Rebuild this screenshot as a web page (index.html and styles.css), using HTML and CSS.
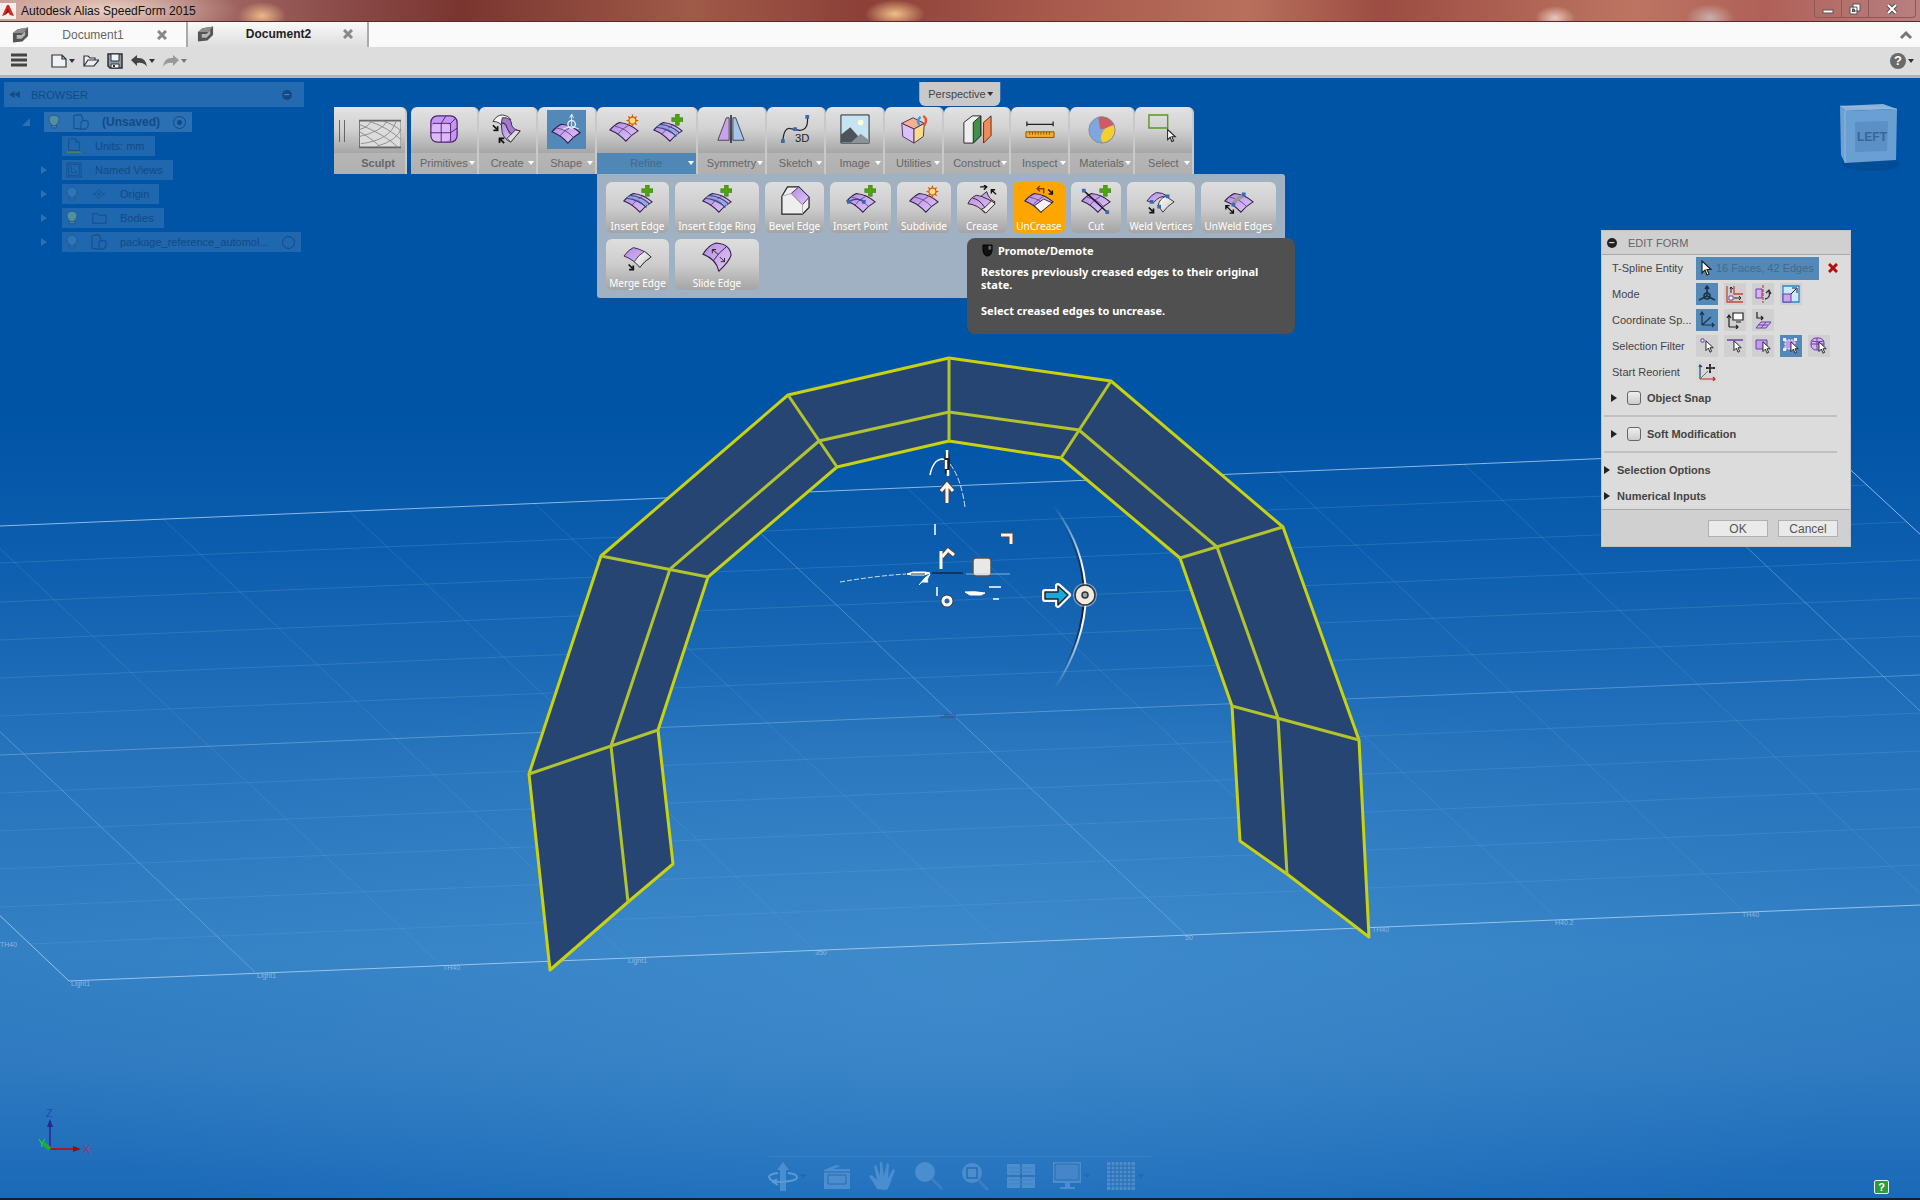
FILE: index.html
```html
<!DOCTYPE html>
<html lang="en">
<head>
    <meta charset="utf-8">
    <title>Autodesk Alias SpeedForm 2015</title>
    <link rel="stylesheet" href="styles.css">
</head>
<body>
    <!-- Shared icons -->
    <svg class="sprite" aria-hidden="true">
        <defs>
            <linearGradient id="purple" x1="0" y1="0" x2="1" y2="1">
                <stop offset="0" stop-color="#b48ae0"/>
                <stop offset="1" stop-color="#e3c9fb"/>
            </linearGradient>
            <linearGradient id="silver" x1="0" y1="0" x2="1" y2="1">
                <stop offset="0" stop-color="#ffffff"/>
                <stop offset="1" stop-color="#c4c4c4"/>
            </linearGradient>
        </defs>
        <symbol id="patch" viewBox="0 0 32 32">
            <path d="M1 17Q6 11 11 9Q22 10 31 18Q24 22 18 29Q11 21 1 17Z" fill="url(#purple)" stroke="#2f2147" stroke-width="1.200"/>
            <path d="M6 13Q17 15 24 23M21 12Q13 16 9 22" fill="none" stroke="#6a4a94"/>
        </symbol>
        <symbol id="plus" viewBox="0 0 32 32">
            <path d="M20 4h4V0h4v4h4v4h-4v4h-4V8h-4z" fill="#4fa312" stroke="#347a0a" stroke-width=".6"/>
        </symbol>
        <symbol id="spark" viewBox="0 0 32 32">
            <path d="M25 0l1.500 3.500L30 2l-1.500 3.500L32 7l-3.500 1.500L30 12l-3.500-1.500L25 14l-1.500-3.500L20 12l1.500-3.500L18 7l3.500-1.500L20 2l3.500 1.500z" fill="#e2570e"/>
            <circle cx="25" cy="7" r="3" fill="#ffe27a"/>
        </symbol>
        <symbol id="band" viewBox="0 0 32 32">
            <path d="M4 14Q17 16 25 24M7 11Q20 12 28 20" fill="none" stroke="#2d4f85" stroke-width="1.300"/>
            <path d="M5 13Q18 14 27 22" fill="none" stroke="#86a5dc" stroke-width="1.600"/>
        </symbol>
        <symbol id="arrow-se" viewBox="0 0 8 8"><path d="M1 1l4 4M6 2v4.500H1.500" fill="none" stroke="#111" stroke-width="1.800"/></symbol>
        <symbol id="cursor" viewBox="0 0 12 16"><path d="M1 1v12l3-3 2 5 2-1-2-4.500h4z" fill="#fff" stroke="#222" stroke-width="1.200"/></symbol>
        <symbol id="bulb" viewBox="0 0 14 18"><path d="M4 12Q1 9 1 6a6 5 0 0 1 12 0Q13 9 10 12v4H4z" fill="currentColor" stroke="#20588f"/><path d="M4 13h6M5 15h4" stroke="#20588f"/></symbol>
        <symbol id="part" viewBox="0 0 18 18"><path d="M1 2l4-1h4l2 4v3l4-1 2 2v5l-3 3H8l-7-1zM9 17V9l3-2" fill="none" stroke="#164f8c" stroke-width="1.200"/></symbol>
        <symbol id="cube" viewBox="0 0 18 16"><path d="M1 6l5-4 11-2v9l-6 6-10 1z" fill="#555"/><path d="M1 6l5-4 11-2-5 6z" fill="#8d8d8d"/><path d="M5 8h5l4-4v4l-4 4H5z" fill="#b5b5b5"/></symbol>
    </svg>

    <header class="titlebar">
        <svg class="app-logo" viewBox="0 0 16 16"><rect width="16" height="16" fill="#f4eeee"/><path d="M2 13L7 2h2l5 11-4-1-2-3-3 3z" fill="#d3291c"/><path d="M5 12l3-7 1 4z" fill="#8d120d"/></svg>
        <span class="app-title">Autodesk Alias SpeedForm 2015</span>
        <div class="window-buttons">
            <button aria-label="Minimize"><svg viewBox="0 0 14 12"><rect x="2" y="7" width="10" height="3" fill="#fff" stroke="#555"/></svg></button>
            <button aria-label="Restore"><svg viewBox="0 0 14 12"><path d="M5 1h7v7H5zM2 4h7v7H2z" fill="#fff" stroke="#555"/><rect x="4.500" y="6.500" width="2" height="2" fill="#b07070" stroke="#555"/></svg></button>
            <button class="close" aria-label="Close"><svg viewBox="0 0 14 12"><path d="M3 2l8 8M11 2l-8 8" stroke="#555" stroke-width="4"/><path d="M3 2l8 8M11 2l-8 8" stroke="#fff" stroke-width="2"/></svg></button>
        </div>
    </header>

    <div class="tabs">
        <div class="tab">
            <svg class="tab-icon"><use href="#cube"/></svg>
            <span>Document1</span>
            <button aria-label="Close Document1"><svg viewBox="0 0 10 10"><path d="M1 1l8 8M9 1L1 9"/></svg></button>
        </div>
        <div class="tab active">
            <svg class="tab-icon"><use href="#cube"/></svg>
            <span>Document2</span>
            <button aria-label="Close Document2"><svg viewBox="0 0 10 10"><path d="M1 1l8 8M9 1L1 9"/></svg></button>
        </div>
        <button class="collapse" aria-label="Collapse"><svg viewBox="0 0 14 10"><path d="M2 8l5-5 5 5" fill="none" stroke="#777" stroke-width="3"/></svg></button>
    </div>

    <div class="toolbar">
        <button class="menu" aria-label="Menu"><svg viewBox="0 0 16 16"><path d="M0 2h16M0 7h16M0 12h16" stroke="#444" stroke-width="3"/></svg></button>
        <button class="caret" aria-label="New"><svg viewBox="0 0 16 16"><path d="M1 2h10l4 4v8H1zM11 2v4h4" fill="#f2f2f2" stroke="#2c3540" stroke-width="1.200"/></svg></button>
        <button aria-label="Open"><svg viewBox="0 0 16 16"><path d="M1 13V3h4l2 2h5v2M1 13L5 7h11l-5 6z" fill="#eee" stroke="#2c3540" stroke-width="1.200"/></svg></button>
        <button aria-label="Save"><svg viewBox="0 0 16 16"><path d="M1 1h14v14H3l-2-2z" fill="#8d99a8" stroke="#2b2f36" stroke-width="1.500"/><path d="M4 1h8v7H4zM4 11h8v4H4z" fill="#f2f2f2" stroke="#2b2f36"/><path d="M6 12h2v2H6z" fill="#2b2f36"/></svg></button>
        <button class="caret" aria-label="Undo"><svg viewBox="0 0 16 16"><path d="M0 7l6-5v3q9-1 10 9-3-5-10-4v3z" fill="#444"/></svg></button>
        <button class="caret off" aria-label="Redo"><svg viewBox="0 0 16 16"><path d="M16 7l-6-5v3Q1 4 0 14q3-5 10-4v3z" fill="#999"/></svg></button>
        <button class="caret help" aria-label="Help"><span>?</span></button>
    </div>

    <main class="viewport">
        <!-- 3D scene: ground grid, mesh and manipulator -->
        <svg class="scene" viewBox="0 78 1920 1120" preserveAspectRatio="xMidYMid slice">
            <defs>
                <linearGradient id="fade" x1="0" y1="0" x2="0" y2="1">
                    <stop offset="0" stop-color="#fff" stop-opacity="0"/>
                    <stop offset=".35" stop-color="#fff"/>
                    <stop offset=".65" stop-color="#fff"/>
                    <stop offset="1" stop-color="#fff" stop-opacity="0"/>
                </linearGradient>
                <linearGradient id="fade-dark" x1="0" y1="0" x2="0" y2="1">
                    <stop offset=".1" stop-color="#123" stop-opacity="0"/>
                    <stop offset=".4" stop-color="#123"/>
                    <stop offset=".6" stop-color="#123"/>
                    <stop offset=".9" stop-color="#123" stop-opacity="0"/>
                </linearGradient>
            </defs>
            <g class="grid">
                <path d="M0 563L1868 485M0 602L1907 522M0 640L1920 560M0 678L1920 598M0 716L1920 636M0 793L1920 713M0 831L1920 751M0 869L1920 789M0 907L1920 827M30 944L1920 865"/>
                <path d="M-24 526L441 965M162 518L627 957M348 510L813 949M534 503L999 941M906 487L1371 926M1092 479L1557 918M1278 472L1743 910M1464 464L1929 902"/>
            </g>
            <g class="grid mid">
                <path d="M0 755L1920 675M-210 534L255 972M720 495L1185 934M1650 456L2115 895"/>
            </g>
            <g class="grid edge">
                <path d="M0 526L1828 449L2301 887M-396 541L69 981L1920 905"/>
            </g>
            <g class="grid-labels">
                <text x="71" y="986">Light1</text>
                <text x="257" y="978">Light1</text>
                <text x="443" y="970">TH40</text>
                <text x="628" y="963">Light1</text>
                <text x="815" y="955">350</text>
                <text x="1185" y="940">50</text>
                <text x="1372" y="932">TH40</text>
                <text x="1555" y="925">H40.2</text>
                <text x="1742" y="917">TH40</text>
                <text x="0" y="947">TH40</text>
            </g>

            <g class="mesh">
                <path class="face" d="M550 970L529 774L601 556L788 395L949 358L1111 381L1283 527L1359 740L1369 937L1287 874L1240 841L1232 706L1180 558L1061 458L949 441L837 467L708 577L658 730L673 864L628 902Z"/>
                <path class="inner" d="M628 902L611 746L670 569L819 441L949 412L1079 430L1217 547L1278 718L1287 874"/>
                <path class="inner" d="M529 774L658 730M601 556L708 577M788 395L837 467M949 358V441M1111 381L1061 458M1283 527L1180 558M1359 740L1232 706"/>
            </g>

            <g class="manipulator">
                <path d="M1052 508Q1083 548 1084 595Q1083 642 1053 688" fill="none" stroke="url(#fade-dark)" stroke-width="2"/>
                <path d="M1054 506Q1085 548 1086 595Q1085 642 1055 688" fill="none" stroke="url(#fade)" stroke-width="2"/>
                <circle cx="1085" cy="595" r="12" fill="#fff" opacity=".4"/>
                <circle cx="1085" cy="595" r="10" fill="#f0ebe6" stroke="#333" stroke-width="1.500"/>
                <circle cx="1085" cy="595" r="3" fill="#9aa" stroke="#333" stroke-width="1.500"/>
                <path d="M1045 592h13v-6l10 9-10 10v-6h-13z" fill="#16a9de" stroke="#fff" stroke-width="6" stroke-linejoin="round"/>
                <path d="M1045 592h13v-6l10 9-10 10v-6h-13z" fill="#16a9de" stroke="#222" stroke-width="1.500" stroke-linejoin="round"/>
                <path class="halo" d="M947 503V485M941 491l6-7 6 7M1001 535h10v9M942 557l6-7 6 5"/>
                <path class="mark" d="M947 503V485M941 491l6-7 6 7M1001 535h10v9M942 557l6-7 6 5"/>
                <rect x="973" y="558" width="18" height="18" rx="3" fill="#e8e8e8" stroke="#5a5249" stroke-width="1.500"/>
                <circle cx="947" cy="601" r="4" fill="#2862aa" stroke="#4a3a30" stroke-width="5"/>
                <circle cx="947" cy="601" r="4" fill="#2862aa" stroke="#fff" stroke-width="3"/>
                <path d="M941 551v18" stroke="#fff" stroke-width="3"/>
                <path d="M935 524v11M937 587v9M930 475Q933 460 942 459L947 460" fill="none" stroke="#fff" stroke-width="1.500"/>
                <path d="M950 464Q961 478 965 507" fill="none" stroke="#fff" stroke-dasharray="6 2" opacity=".8"/>
                <path d="M840 582Q875 576 906 574" fill="none" stroke="#fff" stroke-dasharray="5 2" opacity=".8"/>
                <path d="M945 452h4l1 10-1 12h-4l-1-12z" fill="#222"/>
                <path d="M947 450v8M946 460v9M948 470v6" stroke="#fff" stroke-width="2.500"/>
                <path d="M907 574l6-2h12l5 1-6 2h-12zM919 585l6-7 5-4-3 6 1 2h-6z" fill="#fff" stroke="#fff"/>
                <path d="M911 574h14" stroke="#333"/>
                <path d="M932 573h31" stroke="#111"/>
                <path d="M966 574h44" stroke="#b7d2ee" opacity=".7"/>
                <path d="M965 592q10-1 20 1l-4 2h-11z" fill="#fff" stroke="#fff"/>
                <path d="M989 587h12M993 599h6" stroke="#fff" stroke-width="1.500"/>
                <path d="M940 717h16M944 715h12" stroke="#2a527e"/>
            </g>

            <g class="triad">
                <path d="M50 1149V1121" stroke="#3232a8" stroke-width="2"/>
                <path d="M47 1127l3-8 3 8z" fill="#28288f"/>
                <path d="M50 1149H75" stroke="#b01820" stroke-width="2"/>
                <path d="M73 1146l8 3-8 3z" fill="#8c1018"/>
                <path d="M50 1149l-7-6" stroke="#18b030" stroke-width="4"/>
                <text x="46" y="1117" fill="#2747c0">Z</text>
                <text x="83" y="1153" fill="#c02858">X</text>
                <text x="38" y="1147" fill="#20d040">Y</text>
            </g>
        </svg>

        <button class="camera">Perspective</button>

        <div class="workspace">
            <aside class="browser">
                <div class="browser-head"><svg class="rewind" viewBox="0 0 12 8"><path d="M6 0v8L0 4zM12 0v8L6 4z" fill="#124a86"/></svg><span>BROWSER</span><span class="minus">−</span></div>
                <ul class="tree">
                    <li class="root"><i class="open"></i><div class="node"><svg class="bulb on"><use href="#bulb"/></svg><svg><use href="#part"/></svg><b>(Unsaved)</b><span class="radio on"></span></div></li>
                    <li><i class="none"></i><div class="node"><svg viewBox="0 0 18 18"><path d="M3 14V1h8l4 4v9zM11 1v4h4" fill="none" stroke="#164f8c"/><path d="M1 16h16" stroke="#4d7d63" stroke-width="2"/></svg><span>Units: mm</span></div></li>
                    <li><i></i><div class="node"><svg viewBox="0 0 18 18"><path d="M1 1h16v16H1zM3 3h12v12H3zM6 5v7h6M8 7l5 5" fill="none" stroke="#164f8c"/></svg><span>Named Views</span></div></li>
                    <li><i></i><div class="node"><svg class="bulb"><use href="#bulb"/></svg><svg viewBox="0 0 18 18"><path d="M9 4l5 5-5 5-5-5zM2 9h3M13 9h3M8 8h2v2H8z" fill="none" stroke="#164f8c"/></svg><span>Origin</span></div></li>
                    <li><i></i><div class="node"><svg class="bulb on"><use href="#bulb"/></svg><svg viewBox="0 0 18 18"><path d="M2 15V4h5l2 2h8v9z" fill="none" stroke="#164f8c" stroke-width="1.200"/></svg><span>Bodies</span></div></li>
                    <li><i></i><div class="node"><svg class="bulb"><use href="#bulb"/></svg><svg><use href="#part"/></svg><span>package_reference_automol...</span><span class="radio"></span></div></li>
                </ul>
            </aside>

            <nav class="ribbon">
                <button class="sculpt">
                    <span class="art"><svg class="mesh-icon" viewBox="0 0 48 30"><path d="M0 0h48v30H0z" fill="#dcdcdc" stroke="#666" stroke-width="2"/><path d="M0 12Q20 24 24 30M0 4Q30 16 44 30M10 0Q34 8 48 22M26 0q14 4 22 12M0 18Q26 12 32 0M2 26Q36 22 42 0M20 29Q44 22 48 8M0 10Q10 8 14 0" fill="none" stroke="#888"/></svg></span>
                    <span class="label">Sculpt</span>
                </button>
                <button class="tool">
                    <span class="art"><svg viewBox="0 0 32 32"><rect x="2" y="2" width="28" height="28" rx="7" fill="#c795f2" stroke="#4b2470" stroke-width="1.300"/><rect x="3" y="10" width="20" height="19" rx="5" fill="#dcb8fa"/><path d="M2 20h21l7-5M13 30V10l5-8M4 10h19l5-5M23 10v19" fill="none" stroke="#4b2470"/></svg></span>
                    <span class="label">Primitives</span>
                </button>
                <button class="tool">
                    <span class="art"><svg viewBox="0 0 32 32"><path d="M1 8Q5 1 11 1q7 1 9 5-7-1-9 8Q9 8 1 8z" fill="#f2f2f2" stroke="#333"/><path d="M11 4Q21 3 21 12q2 5 9 6l-4 5Q18 21 16 15 15 8 10 10z" fill="#a877d6" stroke="#333"/><path d="M10 10q4-1 6 5 2 7 8 10l-4 5q-7-3-9-10-1-5-1-10z" fill="url(#purple)" stroke="#333"/><path d="M20 30l10-12-5-1-9 9z" fill="#ddd" stroke="#333"/><use href="#arrow-se" x="0" y="11" width="8" height="8"/><path d="M13 31l-4-4M8 31v-5h5" fill="none" stroke="#111" stroke-width="1.800"/></svg></span>
                    <span class="label">Create</span>
                </button>
                <button class="tool">
                    <span class="art"><span class="picked"><svg viewBox="0 0 32 32"><use href="#patch" y="2"/><path d="M22 13V1M20 4l2-4 2 4M22 13l-9 3M22 13l8 3" fill="none" stroke="#e8eef5"/><circle cx="22" cy="11" r="4" fill="none" stroke="#e8eef5" stroke-width="1.500"/></svg></span></span>
                    <span class="label">Shape</span>
                </button>
                <button class="tool current" aria-expanded="true">
                    <span class="art"><svg viewBox="0 0 32 32"><use href="#patch"/><use href="#spark"/></svg><svg viewBox="0 0 32 32"><use href="#patch"/><use href="#band"/><use href="#plus"/></svg></span>
                    <span class="label">Refine</span>
                </button>
                <button class="tool">
                    <span class="art"><svg viewBox="0 0 32 32"><path d="M2 28L11 4h3v24z" fill="#c9a2ee" stroke="#444"/><path d="M30 28L21 4h-3v24z" fill="#a8c4ea" stroke="#345"/><path d="M16 1v30" stroke="#111" stroke-width="1.500"/></svg></span>
                    <span class="label">Symmetry</span>
                </button>
                <button class="tool">
                    <span class="art"><svg viewBox="0 0 32 32"><path d="M2 29Q3 14 10 15.500q6 1 10 2Q30 17 28 2" fill="none" stroke="#222" stroke-width="1.300"/><path d="M0 27h4v4H0zM13 14h4v4h-4zM26 1h4v4h-4z" fill="#3d69b3"/><text x="15" y="30" font-size="12" fill="#222">3D</text></svg></span>
                    <span class="label">Sketch</span>
                </button>
                <button class="tool">
                    <span class="art"><svg viewBox="0 0 32 32"><path d="M1 1h30v30H1z" fill="#c6e3f3" stroke="#222"/><circle cx="22" cy="9" r="3" fill="#fffbd0"/><path d="M1 22l10-8 14 16H1z" fill="#4d535a"/><path d="M12 30l10-9 9 7v3H12z" fill="#8b9299"/></svg></span>
                    <span class="label">Image</span>
                </button>
                <button class="tool">
                    <span class="art"><svg viewBox="0 0 32 32"><path d="M3 10l12-6 12 6-11 6z" fill="#f7b18d" stroke="#4b3160"/><path d="M3 10l13 6v15L4 24z" fill="#dcc0f8" stroke="#4b3160"/><path d="M16 16l11-6-1 14-10 7z" fill="#fadb8c" stroke="#4b3160"/><path d="M23 3q-5 4-1 9" fill="none" stroke="#3b97e8" stroke-width="2.500"/><path d="M26 2q5 4 1 10" fill="none" stroke="#ee5320" stroke-width="2.500"/></svg></span>
                    <span class="label">Utilities</span>
                </button>
                <button class="tool">
                    <span class="art"><svg viewBox="0 0 32 32"><path d="M2 9l9-7h9v21l-8 8H2z" fill="#eee" stroke="#222"/><path d="M12 9l8-7v21l-8 8z" fill="#3f9248" stroke="#222"/><path d="M23 9l8-7v21l-8 8z" fill="#ee8b57" stroke="#5b2a14"/></svg></span>
                    <span class="label">Construct</span>
                </button>
                <button class="tool">
                    <span class="art"><svg viewBox="0 0 32 32"><path d="M2 8v5M30 8v5M2 11h28" stroke="#222" stroke-width="1.300"/><path d="M1 19h30v6H1z" fill="#f3ad2c" stroke="#855100"/><path d="M5 19v3M8 19v3M11 19v3M14 19v3M17 19v3M20 19v3M23 19v3M26 19v3" stroke="#855100"/></svg></span>
                    <span class="label">Inspect</span>
                </button>
                <button class="tool">
                    <span class="art"><svg viewBox="0 0 32 32"><circle cx="16" cy="17" r="14" fill="#7fa6de"/><path d="M12 3q10-2 17 8-7 5-15 5-1-6-2-13z" fill="#cf5a64"/><path d="M29 12q4 14-12 19-5-6 1-14 4-4 11-5z" fill="#f7cf2d"/><circle cx="16" cy="17" r="14" fill="none" stroke="#889"/></svg></span>
                    <span class="label">Materials</span>
                </button>
                <button class="tool">
                    <span class="art"><svg viewBox="0 0 32 32"><path d="M1 1h20v14H1z" fill="none" stroke="#58991f" stroke-width="1.500"/><use href="#cursor" x="20" y="15" width="11" height="16"/></svg></span>
                    <span class="label">Select</span>
                </button>

                <!-- Refine flyout -->
                <div class="flyout">
                    <button><svg viewBox="0 0 32 32"><use href="#patch"/><use href="#band"/><use href="#plus"/></svg>Insert Edge</button>
                    <button><svg viewBox="0 0 32 32"><use href="#patch"/><use href="#band"/><use href="#plus"/></svg>Insert Edge Ring</button>
                    <button><svg viewBox="0 0 32 32"><path d="M2 12L8 2h12l11 11v11l-7 7H2z" fill="#eee" stroke="#222" stroke-width="1.300"/><path d="M12 9l8-7 11 11-7 8z" fill="url(#purple)" stroke="#432d61"/><path d="M2 12l10-3 12 12v10" fill="none" stroke="#aaa"/></svg>Bevel Edge</button>
                    <button><svg viewBox="0 0 32 32"><use href="#patch"/><path d="M3 18Q10 13 19 17" fill="none" stroke="#2d4f85" stroke-width="1.500"/><path d="M1 16h4v4H1zM17 16h4v4h-4z" fill="#3d69b3"/><use href="#plus"/></svg>Insert Point</button>
                    <button><svg viewBox="0 0 32 32"><use href="#patch"/><use href="#spark"/></svg>Subdivide</button>
                    <button><svg viewBox="0 0 32 32"><path d="M1 20Q4 13 10 11l5 1 6-5q2 8 9 11l-11 12Q12 21 1 20z" fill="url(#purple)" stroke="#322"/><path d="M19 24l7-7 4 3-10 10q-2-3-5-4z" fill="#e8e8e8" stroke="#322"/><path d="M6 14q7 1 13 10M15 12q7 3 11 5" fill="none" stroke="#322"/><path d="M14 2h7M18 0l3 2-3 3M31 10l-5-5M26 9V5h4" fill="none" stroke="#111" stroke-width="1.500"/></svg>Crease</button>
                    <button class="hot"><svg viewBox="0 0 32 32"><use href="#patch"/><path d="M21 15l9 4-12 10-7-7z" fill="#f2f2f2" stroke="#322"/><path d="M14 4h7v5M17 1l-3 3 3 3" fill="none" stroke="#7b3d00" stroke-width="1.500"/><use href="#arrow-se" x="25" y="4" width="7" height="7"/></svg>UnCrease</button>
                    <button><svg viewBox="0 0 32 32"><use href="#patch"/><path d="M3 6l25 23" stroke="#111" stroke-width="1.500"/><path d="M1 4h4v4H1zM26 27h4v4h-4z" fill="#3d69b3"/><use href="#plus"/></svg>Cut</button>
                    <button><svg viewBox="0 0 32 32"><path d="M1 17Q6 10 11 8q7 0 12 4-9-1-15 7z" fill="url(#purple)" stroke="#2f2147"/><path d="M21 12l9 6q-7 4-12 11l-5-7q1-7 8-10z" fill="url(#silver)" stroke="#333"/><path d="M4 16h4v4H4zM12 21h4v4h-4zM21 10h4v4h-4z" fill="#3d69b3"/><use href="#arrow-se" x="2" y="23" width="8" height="8"/></svg>Weld Vertices</button>
                    <button><svg viewBox="0 0 32 32"><use href="#patch"/><path d="M21 11q-9 4-12 11" fill="none" stroke="#999" stroke-width="4"/><path d="M19 8h4v4h-4zM8 19h4v4H8z" fill="#3d69b3"/><path d="M2 22l8 8M2 26v-4h4M10 26v4H6" fill="none" stroke="#111" stroke-width="1.500"/></svg>UnWeld Edges</button>
                    <button><svg viewBox="0 0 32 32"><path d="M1 15Q6 8 11 6Q22 8 30 16Q23 20 18 27Q12 19 1 15Z" fill="url(#purple)" stroke="#2f2147"/><path d="M23 10l7 6q-7 4-12 11l-6-6q4-7 11-11z" fill="url(#silver)" stroke="#333"/><use href="#arrow-se" x="5" y="23" width="8" height="8"/></svg>Merge Edge</button>
                    <button><svg viewBox="0 0 32 32"><path d="M1 13Q7 3 15 1q15 1 16 13-2 7-13 17Q15 18 1 13z" fill="url(#purple)" stroke="#2f2147" stroke-width="1.200"/><path d="M26 5q-8 6-14 15" fill="none" stroke="#2f2147"/><path d="M11 8l6 5M11 12V8h4M19 16l5 5M24 17v4h-4" fill="none" stroke="#222"/></svg>Slide Edge</button>
                </div>

                <div class="tooltip" role="tooltip">
                    <h4><svg viewBox="0 0 12 14"><path d="M1 1h10v6q-1 6-5 6T1 7z" fill="#111" stroke="#000"/><path d="M7 2h3v4H7z" fill="#666"/></svg>Promote/Demote</h4>
                    <p>Restores previously creased edges to their original state.</p>
                    <p>Select creased edges to uncrease.</p>
                </div>
            </nav>

            <div class="side">
                <svg class="viewcube" viewBox="0 0 68 72">
                    <ellipse cx="36" cy="64" rx="29" ry="7" fill="#00407f" opacity=".4"/>
                    <path d="M5 6L48 4l14 5-52 2z" fill="#8cb2d9"/>
                    <path d="M5 6l5 5v52L6 55z" fill="#6fa0d0"/>
                    <path d="M10 11l52-2-1 51-51 3z" fill="#6a9fd3"/>
                    <path d="M20 22l33-1-1 30-32 1z" fill="#5a90c5"/>
                    <path d="M5 6l57 3M10 11v52" stroke="#a9c6e2" opacity=".6"/>
                    <text x="22" y="41">LEFT</text>
                </svg>

                <form class="dialog">
                    <div class="dialog-head"><span class="minus">−</span>EDIT FORM</div>
                    <div class="dialog-body">
                        <div class="row">
                            <span class="name">T-Spline Entity</span>
                            <button type="button" class="entity"><svg><use href="#cursor"/></svg>16 Faces, 42 Edges</button>
                            <button type="button" class="clear" aria-label="Clear"><svg viewBox="0 0 10 10"><path d="M1 1l8 8M9 1L1 9" stroke="#b40e0e" stroke-width="3"/></svg></button>
                        </div>
                        <div class="row">
                            <span class="name">Mode</span>
                            <button type="button" class="opt on" aria-label="All"><svg viewBox="0 0 18 18"><path d="M9 11V2M7 4l2-3 2 3M9 11l-8 4M9 11l8 4" fill="none" stroke="#1d3247" stroke-width="1.500"/><circle cx="9" cy="11" r="3" fill="none" stroke="#1d3247" stroke-width="1.500"/></svg></button>
                            <button type="button" class="opt" aria-label="Move"><svg viewBox="0 0 18 18"><path d="M1 1v16h16M8 1v8h9" fill="none" stroke="#c9472c" stroke-width="1.300"/><path d="M5 8V2M4 4l1-2 2 2M8 13h7M13 11l2 2-2 2" fill="none" stroke="#222"/><path d="M3 11h4v4H3z" fill="#fff" stroke="#6b3fa8"/></svg></button>
                            <button type="button" class="opt" aria-label="Rotate"><svg viewBox="0 0 18 18"><path d="M2 4h6v9H2z" fill="#d5b3f5" stroke="#6b3fa8"/><path d="M9 0v18" stroke="#c22" stroke-dasharray="3 1"/><path d="M11 14q6-1 4-8M12 8l3-3 2 4" fill="none" stroke="#333" stroke-width="1.300"/></svg></button>
                            <button type="button" class="opt" aria-label="Scale"><svg viewBox="0 0 18 18"><path d="M1 1h16v16H1z" fill="#cce8fa" stroke="#2a86c8" stroke-width="1.300"/><path d="M1 9h8v8H1z" fill="#cda4f0" stroke="#6b3fa8"/><path d="M9 9l5-5M10 3h5v5" fill="none" stroke="#222"/></svg></button>
                        </div>
                        <div class="row">
                            <span class="name">Coordinate Sp...</span>
                            <button type="button" class="opt on" aria-label="World"><svg viewBox="0 0 18 18"><path d="M4 14V2M2 4l2-3 2 3M4 14h12M14 12l2 2-2 2M4 14l9-8" fill="none" stroke="#1d3247" stroke-width="1.200"/></svg></button>
                            <button type="button" class="opt" aria-label="View"><svg viewBox="0 0 18 18"><path d="M7 2h10v7H7z" fill="#fff"/><path d="M3 16V5M1 7l2-3 2 3M3 16h9M10 14l2 2-2 2M7 2h10v7H7zM10 11h5" fill="none" stroke="#222" stroke-width="1.200"/></svg></button>
                            <button type="button" class="opt" aria-label="Local"><svg viewBox="0 0 18 18"><path d="M3 1v6h6M7 5l2 2-2 2" fill="none" stroke="#222" stroke-width="1.200"/><path d="M7 11h10l-5 6H2zM12 11l-5 6M4 14h10" fill="#d5b3f5" stroke="#6b3fa8"/></svg></button>
                        </div>
                        <div class="row">
                            <span class="name">Selection Filter</span>
                            <button type="button" class="opt" aria-label="Vertex"><svg viewBox="0 0 18 18"><path d="M3 2h3v3H3z" fill="#fff" stroke="#6b3fa8"/><use href="#cursor" x="7" y="3" width="10" height="13"/></svg></button>
                            <button type="button" class="opt" aria-label="Edge"><svg viewBox="0 0 18 18"><path d="M1 3h16" stroke="#6b3fa8" stroke-width="1.500"/><use href="#cursor" x="7" y="3" width="10" height="13"/></svg></button>
                            <button type="button" class="opt" aria-label="Face"><svg viewBox="0 0 18 18"><path d="M2 3h11v9H2z" fill="#c59aee" stroke="#6b3fa8"/><use href="#cursor" x="8" y="4" width="10" height="13"/></svg></button>
                            <button type="button" class="opt on" aria-label="All"><svg viewBox="0 0 18 18"><path d="M3 3h10v9H3z" fill="#c59aee" stroke="#f0e8fa" stroke-dasharray="2 1"/><path d="M1 1h3v3H1zM12 1h3v3h-3zM1 11h3v3H1z" fill="#eee"/><use href="#cursor" x="8" y="4" width="10" height="13"/></svg></button>
                            <button type="button" class="opt" aria-label="Body"><svg viewBox="0 0 18 18"><rect x="1" y="1" width="13" height="12" rx="5" fill="#d5b3f5" stroke="#6b3fa8"/><path d="M1 7h13M7 1v12M2 4q6 2 12 0" fill="none" stroke="#6b3fa8"/><use href="#cursor" x="8" y="4" width="10" height="13"/></svg></button>
                        </div>
                        <div class="row">
                            <span class="name">Start Reorient</span>
                            <button type="button" class="opt plain" aria-label="Reorient"><svg viewBox="0 0 18 18"><path d="M2 16V2M1 4l1-2 2 2" fill="none" stroke="#234a80" stroke-width="1.200"/><path d="M2 16h15M15 14l2 2-2 2" fill="none" stroke="#c22" stroke-width="1.200"/><path d="M2 16L10 8" stroke="#3a9a3a"/><path d="M12 1v9M8 5h9M11 2h2M11 9h2M9 4v2M16 4v2" stroke="#222" stroke-width="1.500"/></svg></button>
                        </div>
                        <div class="section"><i></i><input type="checkbox" id="snap"><label for="snap">Object Snap</label></div>
                        <hr>
                        <div class="section"><i></i><input type="checkbox" id="soft"><label for="soft">Soft Modification</label></div>
                        <hr>
                        <div class="section wide"><i></i><span>Selection Options</span></div>
                        <div class="section wide"><i></i><span>Numerical Inputs</span></div>
                    </div>
                    <div class="dialog-foot">
                        <button type="button">OK</button>
                        <button type="button">Cancel</button>
                    </div>
                </form>
            </div>
        </div>

        <nav class="navbar">
            <button class="caret" aria-label="Orbit"><svg viewBox="0 0 30 30"><path d="M12 30V9H9l6-8 6 8h-3v21z"/><path d="M10 12Q1 13 1 16q1 5 13 5l8-1Q29 19 29 16q0-3-9-4M9 18l-4 3 5 3" fill="none" stroke="#5b9bd6" stroke-width="2"/></svg></button>
            <button aria-label="Look at"><svg viewBox="0 0 30 30"><path d="M2 9l12-5 5 1-8 3h17v20H2z"/><path d="M6 14h18v9H6zM2 11h26" fill="none" stroke="#2a6cae"/></svg></button>
            <button aria-label="Pan"><svg viewBox="0 0 30 30"><path d="M9 28Q4 19 1 15l3-1 5 5L6 5l2-1 4 11V1h2l2 14 3-13 2 1-1 14 5-9 2 1-5 14-3 6z"/></svg></button>
            <button aria-label="Zoom"><svg viewBox="0 0 30 30"><circle cx="11" cy="11" r="10"/><path d="M18 18l10 10" stroke="#3b7fc2" stroke-width="3"/></svg></button>
            <button aria-label="Fit"><svg viewBox="0 0 30 30"><circle cx="12" cy="12" r="10"/><path d="M18 19l10 10" stroke="#3b7fc2" stroke-width="3"/><path d="M7 7h10v10H7z" fill="none" stroke="#2a6cae" stroke-width="1.500"/></svg></button>
            <button aria-label="Layout"><svg viewBox="0 0 30 30"><path d="M1 3h28v24H1z"/><path d="M15 3v24M1 15h28" stroke="#2a6cae" stroke-width="1.500"/><path d="M3 7h24M3 11h24M3 19h24M3 23h24" stroke="#3f83c4"/></svg></button>
            <button class="caret" aria-label="Display"><svg viewBox="0 0 30 30"><path d="M1 1h28v21H18v4h5v2H8v-2h5v-4H1z"/><path d="M3 3h24v16H3z" fill="#4586c8" stroke="#2a6cae"/></svg></button>
            <button class="caret" aria-label="Grid"><svg viewBox="0 0 30 30"><path d="M1 1h28v28H1z"/><path d="M5 1v28M9 1v28M13 1v28M17 1v28M21 1v28M25 1v28M1 5h28M1 9h28M1 13h28M1 17h28M1 21h28M1 25h28" stroke="#2a6cae"/></svg></button>
        </nav>
        <button class="status" aria-label="Tips">?</button>
    </main>
    <footer class="taskbar"></footer>
</body>
</html>
```

FILE: styles.css
```css
* { box-sizing: border-box; }
body {
    margin: 0;
    height: 100vh;
    display: flex;
    flex-direction: column;
    overflow: hidden;
    font: 11px/14px "Liberation Sans", Arial, sans-serif;
    color: #444;
}
button {
    font: inherit;
    color: inherit;
    background: none;
    border: 0;
    padding: 0;
}
svg { display: block; }
.sprite {
    position: absolute;
    width: 0;
    height: 0;
}

/* Title bar */
.titlebar {
    flex: none;
    height: 22px;
    display: flex;
    align-items: center;
    border-bottom: 1px solid #5c2a2a;
    background:
        radial-gradient(ellipse 130px 30px at 110px 10px, rgba(255, 240, 225, 0.7), transparent),
        radial-gradient(ellipse 24px 14px at 262px 16px, #e9b98a, transparent),
        radial-gradient(ellipse 30px 14px at 895px 14px, #f0c08a, transparent),
        radial-gradient(ellipse 20px 12px at 1555px 18px, #e8c8bc, transparent),
        radial-gradient(ellipse 24px 14px at 1710px 18px, #c8b0ac, transparent),
        linear-gradient(90deg, #c99a90, #8a4a48 18%, #7a3530 24%, #a05a48 36%, #8c4038 45%, #a85a4c 55%, #b8705c 65%, #9c4c42 72%, #bd7562 85%, #b06058 92%, #b88080);
}
.app-logo { width: 16px; height: 16px; }
.app-title {
    margin-left: 5px;
    font: 12px/20px "Liberation Sans", sans-serif;
    color: #111;
}
.window-buttons {
    margin: 0 4px 3px auto;
    height: 18px;
    display: flex;
    border: 1px solid #8a5a5a;
    border-top: 0;
    border-radius: 0 0 4px 4px;
}
.window-buttons button {
    width: 27px;
    display: flex;
    align-items: center;
    justify-content: center;
    border-right: 1px solid #8a5a5a;
}
.window-buttons .close { width: 46px; border: 0; }
.window-buttons svg { width: 14px; height: 12px; }

/* Document tabs */
.tabs {
    flex: none;
    height: 25px;
    display: flex;
    background: #fafafa;
}
.tab {
    width: 188px;
    padding: 0 19px 0 12px;
    display: flex;
    align-items: center;
    justify-content: space-between;
    border-right: 2px solid #aaa;
    font-size: 12px;
    color: #666;
}
.tab.active {
    width: 181px;
    padding: 0 14px 2px 9px;
    background: linear-gradient(#fafafa, #ddd);
    font-weight: bold;
    color: #222;
}
.tab-icon { width: 17px; height: 16px; }
.tab button svg {
    width: 10px;
    height: 10px;
    stroke: #888;
    stroke-width: 3;
}
.collapse { margin: 0 7px 0 auto; }
.collapse svg { width: 14px; height: 10px; }

/* Main toolbar */
.toolbar {
    flex: none;
    height: 31px;
    padding: 0 6px 0 11px;
    display: flex;
    align-items: center;
    gap: 8px;
    background: #ddd;
    border-bottom: 3px solid #b5b5b5;
}
.toolbar svg { width: 16px; height: 16px; }
.toolbar .menu { margin-right: 16px; }
.caret {
    display: flex;
    align-items: center;
    gap: 2px;
}
.caret::after {
    content: "";
    border: 3px solid transparent;
    border-top: 4px solid #333;
    border-bottom: 0;
}
.toolbar .off::after { border-top-color: #777; }
.toolbar .help { margin-left: auto; }
.help span {
    width: 16px;
    height: 16px;
    border-radius: 50%;
    background: #6a6a6a;
    color: #fff;
    font: bold 13px/16px "Liberation Sans", sans-serif;
}

/* Viewport */
.viewport {
    position: relative;
    flex: 1;
    min-height: 0;
    background:
        radial-gradient(ellipse 50% 30% at 50% 82%, rgba(80, 155, 215, 0.4), transparent),
        linear-gradient(#0054a6 30%, #0c5dae 42%, #2673bc 60%, #3380c4 78%, #2f7ac0 88%, #1a69b8);
}
.scene {
    position: absolute;
    inset: 0;
    width: 100%;
    height: 100%;
}
.grid { fill: none; stroke: #6ba7dc; stroke-opacity: 0.25; }
.grid.mid { stroke: #8fc0ea; stroke-opacity: 0.45; }
.grid.edge { stroke: #b7daf5; stroke-opacity: 0.75; }
.grid-labels { font: 7px "Liberation Sans", sans-serif; fill: #a9d0f2; opacity: 0.7; }
.face { fill: #274573; stroke: #c8d210; stroke-width: 3; stroke-linejoin: round; }
.inner { fill: none; stroke: #b3c32c; stroke-width: 3; }
.halo { fill: none; stroke: #5a4438; stroke-width: 5; }
.mark { fill: none; stroke: #fff6ee; stroke-width: 3; }
.triad { font: 11px "Liberation Sans", sans-serif; }

.camera {
    position: absolute;
    top: 4px;
    left: 50%;
    transform: translateX(-50%);
    height: 24px;
    padding: 0 7px 0 9px;
    background: #c9c9c9;
    border-radius: 0 0 6px 6px;
}
.camera::after {
    content: "";
    display: inline-block;
    margin: 0 0 2px 2px;
    border: 3px solid transparent;
    border-top: 4px solid #333;
    border-bottom: 0;
}
.workspace {
    position: relative;
    display: flex;
    align-items: flex-start;
    padding: 4px 0 0 4px;
}

/* Browser tree */
.browser { width: 300px; color: #124a86; }
.browser-head {
    height: 25px;
    padding: 0 12px 0 5px;
    display: flex;
    align-items: center;
    background: #236ab0;
}
.rewind {
    width: 11px;
    height: 7px;
    margin-right: 11px;
}
.minus {
    width: 10px;
    height: 10px;
    border-radius: 50%;
    background: #222;
    color: #ddd;
    font: bold 10px/9px "Liberation Sans", sans-serif;
    text-align: center;
}
.browser-head .minus {
    margin-left: auto;
    background: #124a86;
    color: #4d88c0;
}
.tree {
    list-style: none;
    margin: 5px 0 0;
    padding: 0;
    display: grid;
    gap: 4px;
}
.tree li {
    display: flex;
    align-items: center;
    padding-left: 37px;
}
.tree .root { padding-left: 18px; }
.tree i {
    margin-right: 15px;
    border: 4px solid transparent;
    border-left: 6px solid #2f70ae;
    border-right: 0;
}
.tree .open {
    margin-right: 14px;
    border: 0;
    border-left: 8px solid transparent;
    border-bottom: 8px solid #2f70ae;
}
.tree .none { visibility: hidden; }
.node {
    height: 20px;
    padding: 0 10px 0 4px;
    display: flex;
    align-items: center;
    gap: 13px;
    background: #1f67ae;
}
.node svg { width: 16px; height: 16px; }
.node .bulb { width: 12px; color: #2f76b8; }
.node .bulb.on { color: #548f9c; }
.root .node { background: #2b70b3; }
.root b { font-size: 12px; }
.node:has(.radio) { padding-right: 6px; }
.radio {
    width: 13px;
    height: 13px;
    border: 1px solid #124a86;
    border-radius: 50%;
}
.radio.on {
    background: radial-gradient(#124a86 2px, transparent 3px);
}

/* Ribbon */
.ribbon {
    position: relative;
    margin: 25px 0 0 30px;
    display: flex;
}
.tool, .sculpt {
    min-width: 59px;
    height: 67px;
    display: flex;
    flex-direction: column;
    border-right: 2px solid #c9c9c9;
    border-radius: 6px 6px 0 0;
    background: linear-gradient(#e2e2e2, #d2d2d2 22px, #a6a6a6 46px, #b6b6b6 46px, #b0b0b0);
    color: #666;
    position: relative;
}
.sculpt {
    width: 73px;
    margin-right: 4px;
    border-left: 0;
    border-radius: 0 6px 0 0;
    font-weight: bold;
}
.art {
    width: 100%;
    height: 46px;
    padding-bottom: 2px;
    display: flex;
    align-items: center;
    justify-content: center;
    gap: 14px;
}
.art svg { width: 30px; height: 30px; }
.sculpt .art {
    justify-content: flex-end;
    padding: 8px 4px 0 0;
}
.sculpt .art::before {
    content: "";
    width: 4px;
    height: 22px;
    margin: 0 auto 6px 5px;
    border: solid #666;
    border-width: 0 1px;
}
.art .mesh-icon { width: 48px; height: 30px; }
.label {
    width: 100%;
    height: 21px;
    padding: 0 9px;
    line-height: 21px;
    text-align: center;
}
.sculpt .label { padding-left: 26px; }
.tool .label::after {
    content: "";
    position: absolute;
    right: 2px;
    bottom: 9px;
    border: 3px solid transparent;
    border-top: 4px solid #fff;
    border-bottom: 0;
}
.current { min-width: 101px; }
.current .label { background: #4f87b7; color: #44698b; }
.picked {
    width: 39px;
    height: 39px;
    display: grid;
    place-items: center;
    background: #5289b8;
}

/* Flyout under the Refine group */
.flyout {
    position: absolute;
    top: 67px;
    left: 263px;
    padding: 8px 9px;
    display: grid;
    grid-template-columns: 63px 84px 59px 61px 54px 50px 52px 50px 68px 75px;
    gap: 6px;
    background: #a1b1c4;
    border-radius: 0 3px 3px 3px;
}
.flyout button {
    height: 51px;
    display: flex;
    flex-direction: column;
    align-items: center;
    justify-content: space-between;
    padding: 3px 0 0;
    border-radius: 6px;
    background: linear-gradient(#dedede, #cdcdcd 50%, #a4a4a4);
    color: #fff;
    font: 10px/14px "Noto Sans", sans-serif;
    white-space: nowrap;
}
.flyout .hot { background: #ffa500; }
.flyout svg { width: 30px; height: 30px; }
.tooltip {
    position: absolute;
    top: 131px;
    left: 633px;
    width: 328px;
    padding: 6px 14px 17px;
    border-radius: 8px;
    background: #505050;
    color: #fff;
    font: bold 11px/13px "Noto Sans", sans-serif;
}
.tooltip h4 {
    margin: 0 0 8px 1px;
    display: flex;
    gap: 5px;
    font: inherit;
}
.tooltip svg { width: 11px; height: 13px; }
.tooltip p { margin: 0 0 13px; }
.tooltip p:last-child { margin: 0; }

/* Right side: view cube and dialog */
.side {
    margin: 18px 69px 0 auto;
    width: 250px;
    display: flex;
    flex-direction: column;
}
.viewcube {
    align-self: flex-end;
    width: 68px;
    height: 72px;
    margin-right: -52px;
    font: bold 12px "Liberation Sans", sans-serif;
    fill: #38669a;
}
.dialog {
    margin-top: 58px;
    background: #dcdcdc;
    border: 1px solid #c3c3c3;
}
.dialog-head {
    height: 24px;
    padding-left: 5px;
    display: flex;
    align-items: center;
    gap: 11px;
    background: #d0d0d0;
    border-bottom: 1px solid #aaa;
    color: #666;
}
.row {
    height: 26px;
    padding-left: 10px;
    display: flex;
    align-items: center;
    gap: 6px;
}
.name { width: 78px; white-space: nowrap; }
.entity {
    width: 123px;
    height: 23px;
    padding-left: 5px;
    display: flex;
    align-items: center;
    gap: 3px;
    background: #5289b8;
    color: #46698a;
    white-space: nowrap;
}
.entity svg { width: 12px; height: 16px; }
.clear { margin-left: 3px; }
.clear svg { width: 10px; height: 10px; }
.opt {
    width: 22px;
    height: 22px;
    display: grid;
    place-items: center;
    background: #d0d0d0;
}
.opt.plain { background: #d8d8d8; }
.opt.on { background: #5289b8; }
.opt svg { width: 18px; height: 18px; }
.section {
    height: 26px;
    padding-left: 9px;
    display: flex;
    align-items: center;
    font-weight: bold;
}
.section.wide { padding-left: 2px; }
.section i {
    margin-right: 10px;
    border: 4px solid transparent;
    border-left: 6px solid #222;
    border-right: 0;
}
.section.wide i { margin-right: 7px; }
.section input {
    appearance: none;
    width: 14px;
    height: 14px;
    margin: 0 6px 0 0;
    border: 1px solid #666;
    border-radius: 3px;
    background: linear-gradient(#eee, #ccc);
}
.dialog hr {
    height: 2px;
    margin: 4px 13px 4px 2px;
    border: 0;
    background: #c0c0c0;
}
.dialog-foot {
    height: 37px;
    padding: 1px 12px 0;
    display: flex;
    align-items: center;
    justify-content: flex-end;
    gap: 10px;
    background: #d0d0d0;
    border-top: 1px solid #aaa;
}
.dialog-foot button {
    width: 60px;
    height: 17px;
    background: #eaeaea;
    border: 1px solid #b0b0b0;
    color: #555;
    font-size: 12px;
}

/* Navigation bar */
.navbar {
    position: absolute;
    bottom: 4px;
    left: 50%;
    transform: translateX(-50%);
    height: 38px;
    padding-right: 8px;
    display: flex;
    align-items: center;
    gap: 16px;
    border-top: 1px solid #3a80c2;
}
.navbar svg { width: 30px; height: 30px; fill: #4a8ecf; }
.navbar .caret::after { border-top-color: #2468ac; }
.status {
    position: absolute;
    right: 31px;
    bottom: 4px;
    width: 15px;
    height: 14px;
    border: 1px solid #e8f4e8;
    border-radius: 2px;
    background: #2f9a3c;
    color: #fff;
    font: bold 11px/12px "Liberation Sans", sans-serif;
}
.taskbar {
    flex: none;
    height: 2px;
    background: #14202c;
}
```
